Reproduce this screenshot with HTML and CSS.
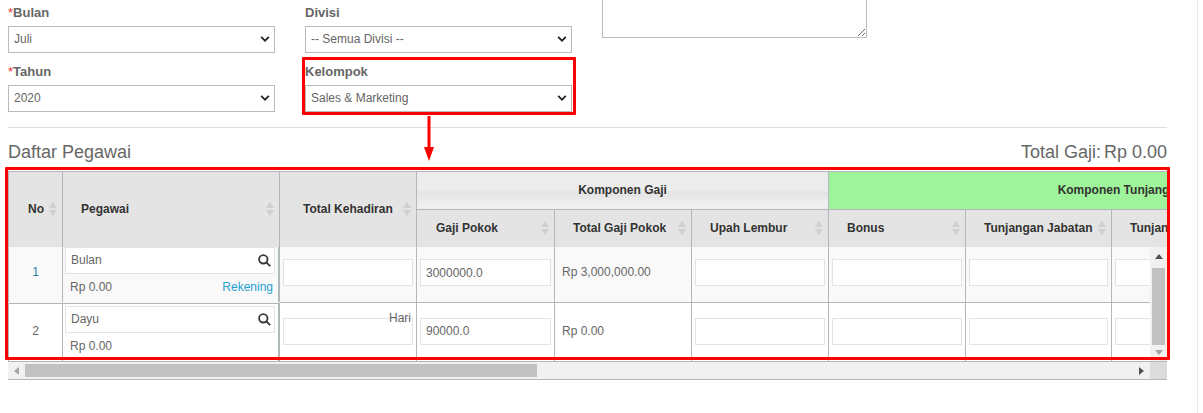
FILE: index.html
```html
<!DOCTYPE html>
<html lang="id">
<head>
<meta charset="utf-8">
<title>Daftar Pegawai</title>
<link rel="stylesheet" href="styles.css">
</head>
<body>
<div class="page">
  <form class="filters">
    <div class="col">
      <div class="field">
        <label class="lbl"><span class="req">*</span>Bulan</label>
        <div class="sel-wrap"><select class="sel"><option>Juli</option></select><svg class="chev" viewBox="0 0 11 7"><path d="M1 1l4.5 4.5L10 1"/></svg></div>
      </div>
      <div class="field">
        <label class="lbl"><span class="req">*</span>Tahun</label>
        <div class="sel-wrap"><select class="sel"><option>2020</option></select><svg class="chev" viewBox="0 0 11 7"><path d="M1 1l4.5 4.5L10 1"/></svg></div>
      </div>
    </div>
    <div class="col">
      <div class="field">
        <label class="lbl">Divisi</label>
        <div class="sel-wrap"><select class="sel"><option>-- Semua Divisi --</option></select><svg class="chev" viewBox="0 0 11 7"><path d="M1 1l4.5 4.5L10 1"/></svg></div>
      </div>
      <div class="field">
        <label class="lbl">Kelompok</label>
        <div class="sel-wrap"><select class="sel"><option>Sales &amp; Marketing</option></select><svg class="chev" viewBox="0 0 11 7"><path d="M1 1l4.5 4.5L10 1"/></svg></div>
      </div>
    </div>
    <div class="col-note">
      <textarea class="note"></textarea>
    </div>
  </form>
  <hr class="rule">
  <div class="titlebar">
    <h2 class="title">Daftar Pegawai</h2>
    <div class="title total"><span>Total Gaji:</span><span class="total-val">Rp 0.00</span></div>
  </div>

  <div class="grid">
    <div class="grid-head">
      <table class="tbl">
        <colgroup>
          <col class="c-no"><col class="c-peg"><col class="c-had"><col class="c-gp"><col class="c-tgp"><col class="c-ul"><col class="c-bon"><col class="c-tj"><col class="c-t3"><col class="c-t4">
        </colgroup>
        <thead>
          <tr class="tr-group">
            <th rowspan="2" class="first"><div class="th-in th-19"><span>No</span><svg class="sort" viewBox="0 0 8 14"><path d="M4 0l4 6H0zM4 14L0 8h8z"/></svg></div></th>
            <th rowspan="2"><div class="th-in"><span>Pegawai</span><svg class="sort" viewBox="0 0 8 14"><path d="M4 0l4 6H0zM4 14L0 8h8z"/></svg></div></th>
            <th rowspan="2"><div class="th-in th-wide"><span>Total Kehadiran</span><svg class="sort" viewBox="0 0 8 14"><path d="M4 0l4 6H0zM4 14L0 8h8z"/></svg></div></th>
            <th colspan="3" class="grp grp-gaji">Komponen Gaji</th>
            <th colspan="4" class="grp grp-tunj">Komponen Tunjangan</th>
          </tr>
          <tr class="tr-sub">
            <th><div class="th-in th-19"><span>Gaji Pokok</span><svg class="sort" viewBox="0 0 8 14"><path d="M4 0l4 6H0zM4 14L0 8h8z"/></svg></div></th>
            <th><div class="th-in"><span>Total Gaji Pokok</span><svg class="sort" viewBox="0 0 8 14"><path d="M4 0l4 6H0zM4 14L0 8h8z"/></svg></div></th>
            <th><div class="th-in"><span>Upah Lembur</span><svg class="sort" viewBox="0 0 8 14"><path d="M4 0l4 6H0zM4 14L0 8h8z"/></svg></div></th>
            <th><div class="th-in"><span>Bonus</span><svg class="sort" viewBox="0 0 8 14"><path d="M4 0l4 6H0zM4 14L0 8h8z"/></svg></div></th>
            <th><div class="th-in"><span>Tunjangan Jabatan</span><svg class="sort" viewBox="0 0 8 14"><path d="M4 0l4 6H0zM4 14L0 8h8z"/></svg></div></th>
            <th><div class="th-in"><span>Tunjangan Transport</span></div></th>
            <th><div class="th-in"><span>Tunjangan Makan</span></div></th>
          </tr>
        </thead>
      </table>
    </div>
    <div class="grid-bodyrow">
      <div class="grid-body">
        <table class="tbl">
          <colgroup>
            <col class="c-no"><col class="c-peg"><col class="c-had"><col class="c-gp"><col class="c-tgp"><col class="c-ul"><col class="c-bon"><col class="c-tj"><col class="c-t3"><col class="c-t4">
          </colgroup>
          <tbody>
            <tr class="row row-1">
              <td class="first num fz"><a class="link">1</a></td>
              <td class="peg fz fz-edge">
                <div class="lookup"><span>Bulan</span><svg class="mag" viewBox="0 0 13 13"><circle cx="5.3" cy="5.3" r="4.2"/><path d="M8.4 8.4l3.8 3.8"/></svg></div>
                <div class="peg-meta"><span>Rp 0.00</span><a class="link-blue">Rekening</a></div>
              </td>
              <td><input class="inp"></td>
              <td><input class="inp" value="3000000.0"></td>
              <td class="txt">Rp 3,000,000.00</td>
              <td><input class="inp"></td>
              <td><input class="inp"></td>
              <td><input class="inp"></td>
              <td><input class="inp"></td>
              <td><input class="inp"></td>
            </tr>
            <tr class="row row-2">
              <td class="first num fz">2</td>
              <td class="peg fz fz-edge">
                <div class="lookup"><span>Dayu</span><svg class="mag" viewBox="0 0 13 13"><circle cx="5.3" cy="5.3" r="4.2"/><path d="M8.4 8.4l3.8 3.8"/></svg></div>
                <div class="peg-meta"><span>Rp 0.00</span></div>
              </td>
              <td class="had"><div class="hari">Hari</div><input class="inp"></td>
              <td><input class="inp" value="90000.0"></td>
              <td class="txt">Rp 0.00</td>
              <td><input class="inp"></td>
              <td><input class="inp"></td>
              <td><input class="inp"></td>
              <td><input class="inp"></td>
              <td><input class="inp"></td>
            </tr>
          </tbody>
        </table>
      </div>
      <div class="vbar">
        <svg class="arrow-v arrow-up" viewBox="0 0 8 5"><path class="a-dark" d="M4 0l4 5H0z"/></svg>
        <div class="vtrack"><div class="vthumb"></div></div>
        <svg class="arrow-v arrow-down" viewBox="0 0 8 5"><path class="a-light" d="M0 0h8L4 5z"/></svg>
      </div>
    </div>
    <div class="hbar">
      <div class="hbtn"><svg class="arrow-h" viewBox="0 0 5 8"><path class="a-light" d="M5 0v8L0 4z"/></svg></div>
      <div class="htrack"><div class="hthumb"></div></div>
      <div class="hbtn"><svg class="arrow-h" viewBox="0 0 5 8"><path class="a-dark" d="M0 0l5 4-5 4z"/></svg></div>
      <div class="hcorner"></div>
    </div>
  </div>
</div>

<div class="mark mark-field"></div>
<div class="mark mark-table"></div>
<svg class="mark-arrow" viewBox="0 0 10 46"><path d="M3.5 0h3v31h3.5L5 45 0 31h3.5z"/></svg>
<div class="edge"></div>
</body>
</html>
```

FILE: styles.css
```css
* { box-sizing: border-box; }
html, body { margin: 0; padding: 0; background: #fff; }
body {
  height: 413px;
  overflow: hidden;
  position: relative;
  font: 12px/1.2 "Liberation Sans", Arial, sans-serif;
  color: #666;
}
.page { width: 1159px; margin-left: 8px; }

/* filter form */
.filters { display: flex; height: 112px; }
.col { width: 267px; margin-right: 30px; }
.col-note { width: 265px; }
.field { margin-bottom: 6px; }
.lbl { display: block; height: 26px; line-height: 25px; font-size: 13px; font-weight: bold; color: #666; }
.req { color: #e33; font-weight: normal; }
.sel-wrap { position: relative; }
.sel {
  display: block;
  width: 100%;
  height: 27px;
  padding: 0 0 2px 5px;
  border: 1px solid #bbb;
  border-radius: 0;
  background: #fff;
  color: #666;
  font: 12px "Liberation Sans", Arial, sans-serif;
  appearance: none;
  -webkit-appearance: none;
}
.chev {
  position: absolute;
  right: 5px;
  top: 10px;
  width: 10px;
  height: 6px;
  fill: none;
  stroke: #222;
  stroke-width: 2;
  pointer-events: none;
}
.note {
  display: block;
  width: 100%;
  height: 38px;
  border: 1px solid #bbb;
  border-top: 0;
  border-radius: 0;
  background: #fff;
  outline: 0;
}
.rule { height: 1px; margin: 15px 0 0; border: 0; background: #ddd; }

/* title */
.titlebar { display: flex; justify-content: space-between; height: 43px; padding-top: 14px; }
.title { margin: 0; font-size: 18px; line-height: 20px; font-weight: normal; color: #666; }
.total { display: flex; }
.total-val { margin-left: 3px; }

/* data grid */
.grid { width: 1159px; }
.grid-head { overflow: hidden; border-top: 1px solid #b0b8bb; }
.tbl { table-layout: fixed; width: 1404px; border-collapse: separate; border-spacing: 0; }
.c-no { width: 55px; }
.c-peg { width: 217px; }
.c-had { width: 137px; }
.c-gp { width: 138px; }
.c-tgp { width: 137px; }
.c-ul { width: 137px; }
.c-bon { width: 137px; }
.c-tj { width: 146px; }
.c-t3 { width: 150px; }
.c-t4 { width: 150px; }

.tr-group { height: 38px; }
.tr-sub { height: 37px; }
.tbl th {
  padding: 0;
  background: #e4e4e4;
  border-right: 1px solid #b0b8bb;
  color: #333;
  font-size: 12px;
  font-weight: bold;
  text-align: left;
  white-space: nowrap;
}
.tbl .first { border-left: 1px solid #b0b8bb; }
.th-in { display: flex; align-items: center; justify-content: space-between; padding: 0 5px 0 18px; }
.th-in.th-19 { padding-left: 19px; }
.th-in.th-wide { padding-left: 23px; }
.sort { width: 8px; height: 14px; fill: #d0d0d0; flex: none; }
.tbl .grp { text-align: center; border-bottom: 1px solid #b0b8bb; }
.tbl .grp-gaji { background: linear-gradient(#ececec 0, #ececec 48%, #e5e5e5 54%, #e6e6e6 64%, #f0f0f0 85%, #f0f0f0 100%); }
.tbl .grp-tunj { background: #9ff39a; border-right: 0; }

.grid-bodyrow { display: flex; height: 114px; }
.grid-body { width: 1142px; height: 114px; overflow: hidden; }
.row-1 { height: 56px; background: #f9f9f9; }
.row-2 { height: 60px; background: #fff; }
.tbl td {
  padding: 0 3px 4px;
  border-right: 1px solid #b0b8bb;
  vertical-align: middle;
  font-size: 12px;
  color: #666;
}
.row-1 td { border-bottom: 1px solid #b0b8bb; }
.row-1 .fz { border-bottom-color: #f9f9f9; }
.row-2 .fz { border-top: 1px solid #b0b8bb; }
.tbl .num { text-align: center; padding-left: 0; padding-right: 0; }
.tbl .fz-edge { box-shadow: inset -1px 0 0 #b0b8bb; }
.link { color: #2a7fa8; }
.link-blue { color: #1ba1d6; }
.inp {
  display: block;
  width: 100%;
  height: 27px;
  padding: 0 5px;
  border: 1px solid #e3e3e3;
  border-radius: 0;
  background: #fff;
  outline: 0;
  color: #666;
  font: 12px "Liberation Sans", Arial, sans-serif;
}
.tbl .txt { padding-left: 7px; }
.tbl .had { position: relative; }
.hari { position: absolute; right: 5px; top: 8px; line-height: 14px; }

.tbl .peg { vertical-align: top; padding: 0 4px 0 2px; }
.tbl .row-2 .peg { padding-top: 2px; }
.lookup {
  display: flex;
  align-items: center;
  justify-content: space-between;
  height: 27px;
  padding: 0 3px 0 5px;
  background: #fff;
  border: 1px solid #e3e3e3;
}
.mag { width: 13px; height: 13px; fill: none; stroke: #3a3a3a; stroke-width: 1.9; }
.peg-meta { display: flex; justify-content: space-between; margin-top: 6px; padding: 0 2px 0 5px; line-height: 14px; }

/* scrollbars */
.vbar { display: flex; flex-direction: column; width: 17px; background: #f1f1f1; }
.arrow-v { width: 8px; height: 5px; margin: 0 auto; flex: none; }
.arrow-up { margin-top: 7px; margin-bottom: 9px; }
.arrow-down { margin-bottom: 6px; }
.vtrack { flex: 1; padding: 0 2px; }
.vthumb { height: 77px; background: #c1c1c1; }
.hbar { display: flex; height: 19px; background: #f1f1f1; border-top: 1px solid #b0b8bb; border-bottom: 1px solid #b0b8bb; }
.hbtn { display: flex; align-items: center; justify-content: center; width: 17px; flex: none; }
.arrow-h { width: 5px; height: 8px; }
.htrack { flex: 1; padding: 2px 0; }
.hthumb { width: 512px; height: 13px; background: #c1c1c1; }
.hcorner { width: 17px; flex: none; background: #dcdcdc; }
.a-dark { fill: #505050; }
.a-light { fill: #a3a3a3; }

/* annotation overlays */
.mark { position: absolute; border: 3px solid #f00; pointer-events: none; }
.mark-field { left: 302px; top: 57px; width: 274px; height: 58px; border-radius: 1px; }
.mark-table { left: 5px; top: 167px; width: 1165px; height: 193px; border-radius: 1px; }
.mark-arrow { position: absolute; left: 424px; top: 116px; width: 10px; height: 46px; fill: #f00; }
.edge { position: absolute; left: 1197px; top: 0; width: 1px; height: 413px; background: #e6e6e6; }
```
